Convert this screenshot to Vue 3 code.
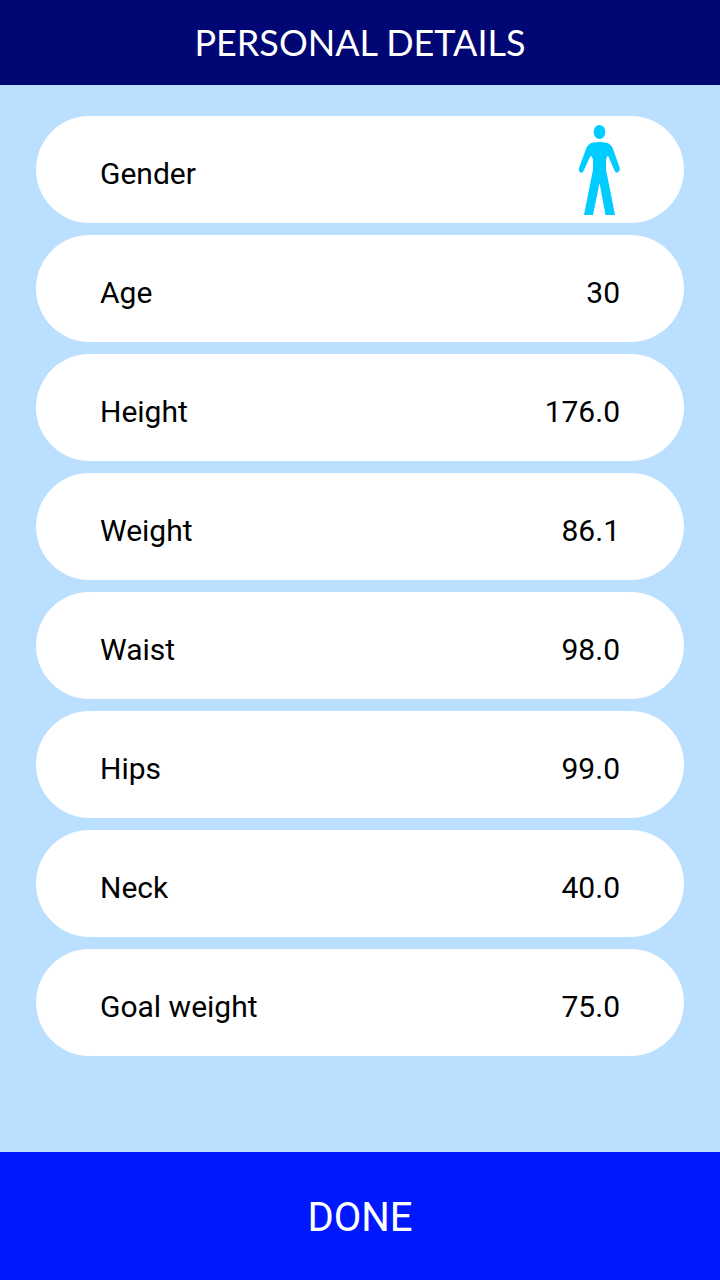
<script setup>
import { ref } from 'vue'

const fields = ref([
  { id: 'age', label: 'Age', value: '30' },
  { id: 'height', label: 'Height', value: '176.0' },
  { id: 'weight', label: 'Weight', value: '86.1' },
  { id: 'waist', label: 'Waist', value: '98.0' },
  { id: 'hips', label: 'Hips', value: '99.0' },
  { id: 'neck', label: 'Neck', value: '40.0' },
  { id: 'goal-weight', label: 'Goal weight', value: '75.0' },
])
</script>

<template>
  <div class="screen">
    <header class="title-bar">
      <h1>PERSONAL DETAILS</h1>
    </header>
    <form id="details" class="rows" @submit.prevent>
      <div class="row">
        <label for="gender">Gender</label>
        <button id="gender" class="gender" type="button">
          <svg width="42" height="91" viewBox="0 0 42 91" fill="#00ccff" aria-hidden="true">
            <ellipse cx="21.5" cy="7" rx="5.8" ry="7" />
            <path d="M16 17.5 Q21.5 16.5 27 17.5 Q33 18 35 24 L41.7 43 Q42.3 46.5 39.5 47.8 Q37.3 48 36.3 45 L31.5 34 Q30.5 30.5 29.5 31 Q28 33 28 37 V45 L30.5 57 L37 90 H27.5 L21.5 58 L15 90 H6 L12.5 57 L15 45 V37 Q15 33 13.5 31 Q12.5 30.5 11 34 L6 45 Q5 48 3 47.8 Q0.2 46.5 1 43 L8 24 Q10 18 16 17.5 Z" />
          </svg>
        </button>
      </div>
      <div v-for="field in fields" :key="field.id" class="row">
        <label :for="field.id">{{ field.label }}</label>
        <input :id="field.id" v-model="field.value" type="text" inputmode="decimal" />
      </div>
    </form>
    <button class="done" type="submit" form="details">DONE</button>
  </div>
</template>

<style>
body {
  margin: 0;
}
</style>

<style scoped>
.screen {
  display: flex;
  flex-direction: column;
  min-height: 100vh;
  background: #bbdfff;
  color: #000;
  font-family: Roboto, "Liberation Sans", sans-serif;
}

.title-bar {
  padding: 18px 16px 19px;
  background: #000673;
  color: #fff;
  text-align: center;
}

h1 {
  margin: 0;
  font-family: Lato, "Liberation Sans", sans-serif;
  font-size: 36px;
  font-weight: 400;
  line-height: 48px;
}

.rows {
  display: flex;
  flex: 1;
  flex-direction: column;
  gap: 12px;
  padding: 31px 36px;
}

.row {
  display: flex;
  align-items: center;
  justify-content: space-between;
  box-sizing: border-box;
  min-height: 107px;
  padding: 9px 64px 7px;
  border-radius: 54px;
  background: #fff;
  font-size: 30px;
  line-height: 36px;
}

label {
  flex: none;
  padding-top: 6px;
}

input {
  flex: 1;
  min-width: 0;
  margin: 0;
  padding: 6px 0 0;
  border: 0;
  background: none;
  color: inherit;
  font: inherit;
  text-align: right;
}

.gender {
  display: flex;
  padding: 0;
  border: 0;
  background: none;
}

.done {
  min-height: 128px;
  padding: 20px 16px 16px;
  border: 0;
  background: #0018ff;
  color: #fff;
  font-family: inherit;
  font-size: 40px;
  line-height: 48px;
}
</style>
